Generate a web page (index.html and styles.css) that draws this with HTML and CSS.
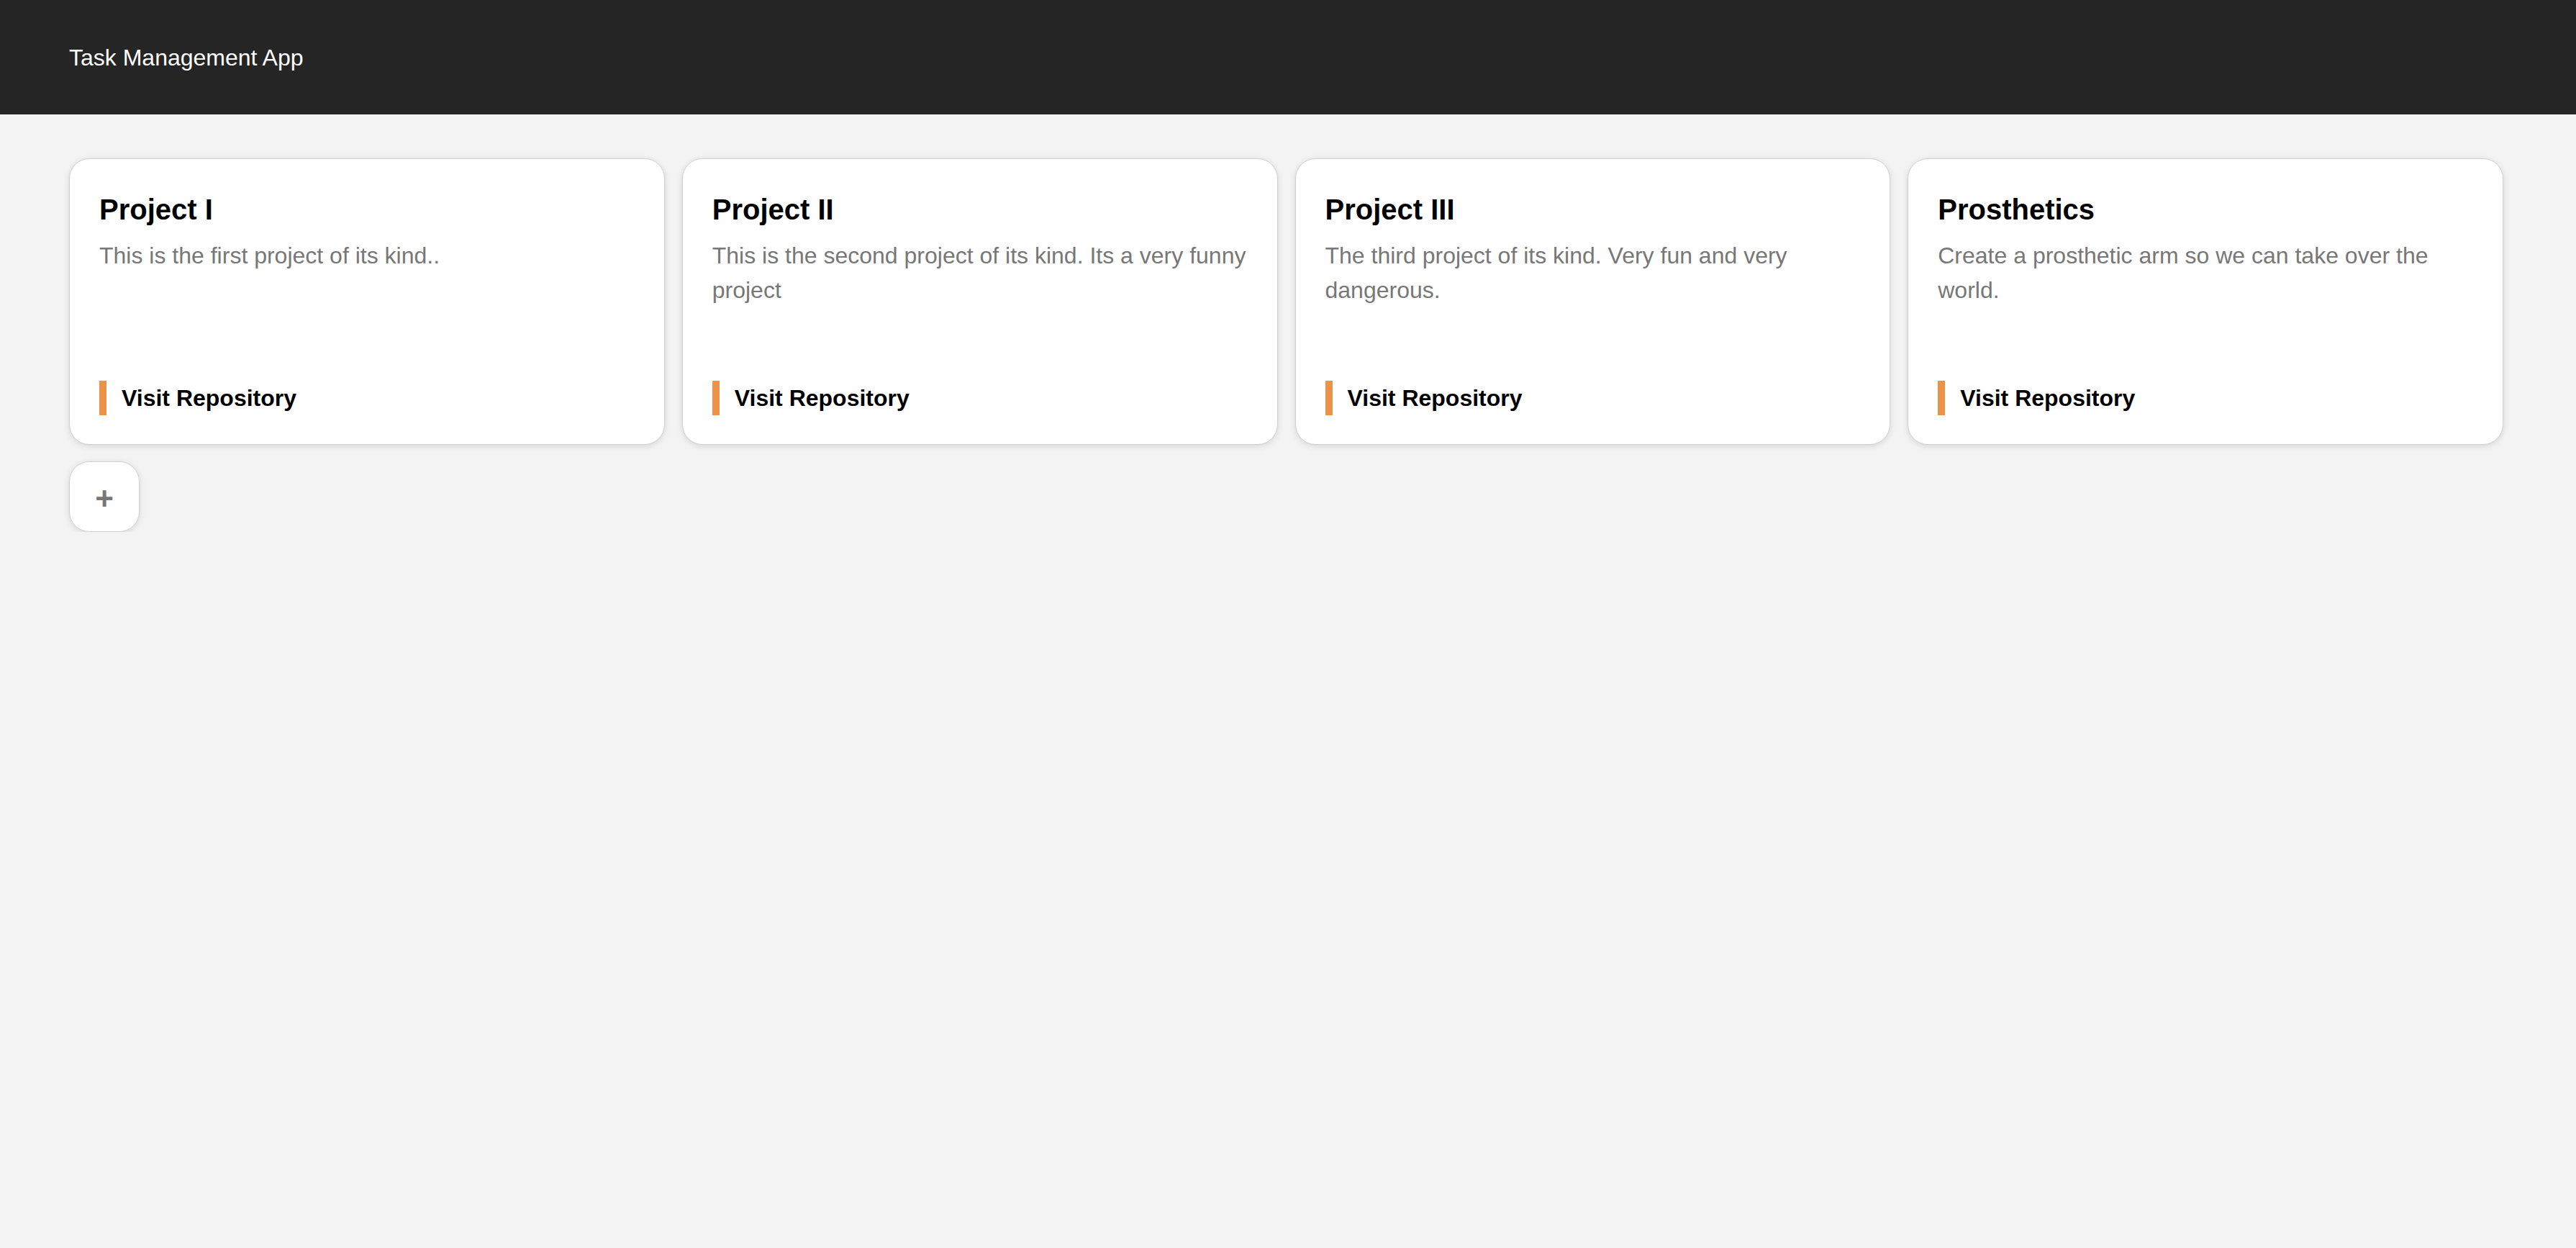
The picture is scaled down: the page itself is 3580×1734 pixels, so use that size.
FILE: index.html
```html
<!DOCTYPE html>
<html lang="en">
<head>
<meta charset="utf-8">
<title>Task Management App</title>
<link rel="stylesheet" href="styles.css">
</head>
<body>
<header class="topbar">
  <span class="brand">Task Management App</span>
</header>
<main class="content">
  <section class="project-grid">
    <article class="card">
      <h2 class="card-title">Project I</h2>
      <p class="card-desc">This is the first project of its kind..</p>
      <a class="card-link" href="#">Visit Repository</a>
    </article>
    <article class="card">
      <h2 class="card-title">Project II</h2>
      <p class="card-desc">This is the second project of its kind. Its a very funny project</p>
      <a class="card-link" href="#">Visit Repository</a>
    </article>
    <article class="card">
      <h2 class="card-title">Project III</h2>
      <p class="card-desc">The third project of its kind. Very fun and very dangerous.</p>
      <a class="card-link" href="#">Visit Repository</a>
    </article>
    <article class="card">
      <h2 class="card-title">Prosthetics</h2>
      <p class="card-desc">Create a prosthetic arm so we can take over the world.</p>
      <a class="card-link" href="#">Visit Repository</a>
    </article>
  </section>
  <button class="add-btn" type="button">+</button>
</main>
</body>
</html>
```
FILE: styles.css
```css
* { box-sizing: border-box; }

html, body {
  margin: 0;
  padding: 0;
}

body {
  background: #f3f3f3;
  font-family: "Liberation Sans", Arial, Helvetica, sans-serif;
  line-height: 1.5;
  color: #000;
}

.topbar {
  height: 159px;
  background: #252525;
  display: flex;
  align-items: center;
  padding: 0 96px;
}

.brand {
  color: #ffffff;
  font-size: 32px;
  line-height: 48px;
}

.content {
  padding: 61px 101px 0 96px;
}

.project-grid {
  display: grid;
  grid-template-columns: repeat(4, 1fr);
  gap: 24px;
}

.card {
  background: #ffffff;
  border: 1px solid #d0d0d0;
  border-radius: 28px;
  box-shadow: 0 2px 8px rgba(0, 0, 0, 0.12);
  padding: 40px 36px 40px 41px;
  min-height: 398px;
  display: flex;
  flex-direction: column;
}

.card-title {
  margin: 0 0 10px;
  font-size: 40px;
  line-height: 60px;
  font-weight: 700;
  color: #000;
}

.card-desc {
  margin: 0;
  font-size: 32px;
  line-height: 48px;
  color: #777777;
}

.card-link {
  margin-top: auto;
  align-self: flex-start;
  border-left: 10px solid #ea9349;
  padding-left: 21px;
  font-size: 32px;
  line-height: 48px;
  font-weight: 700;
  color: #000;
  text-decoration: none;
}

.add-btn {
  margin-top: 23px;
  width: 98px;
  height: 98px;
  border: 1px solid #d0d0d0;
  border-radius: 28px;
  background: #ffffff;
  box-shadow: 0 2px 8px rgba(0, 0, 0, 0.12);
  font-family: "Liberation Sans", Arial, Helvetica, sans-serif;
  font-size: 44px;
  font-weight: 700;
  line-height: 1;
  color: #777777;
  padding: 6px 0 0;
  display: flex;
  align-items: center;
  justify-content: center;
  cursor: pointer;
}
```
